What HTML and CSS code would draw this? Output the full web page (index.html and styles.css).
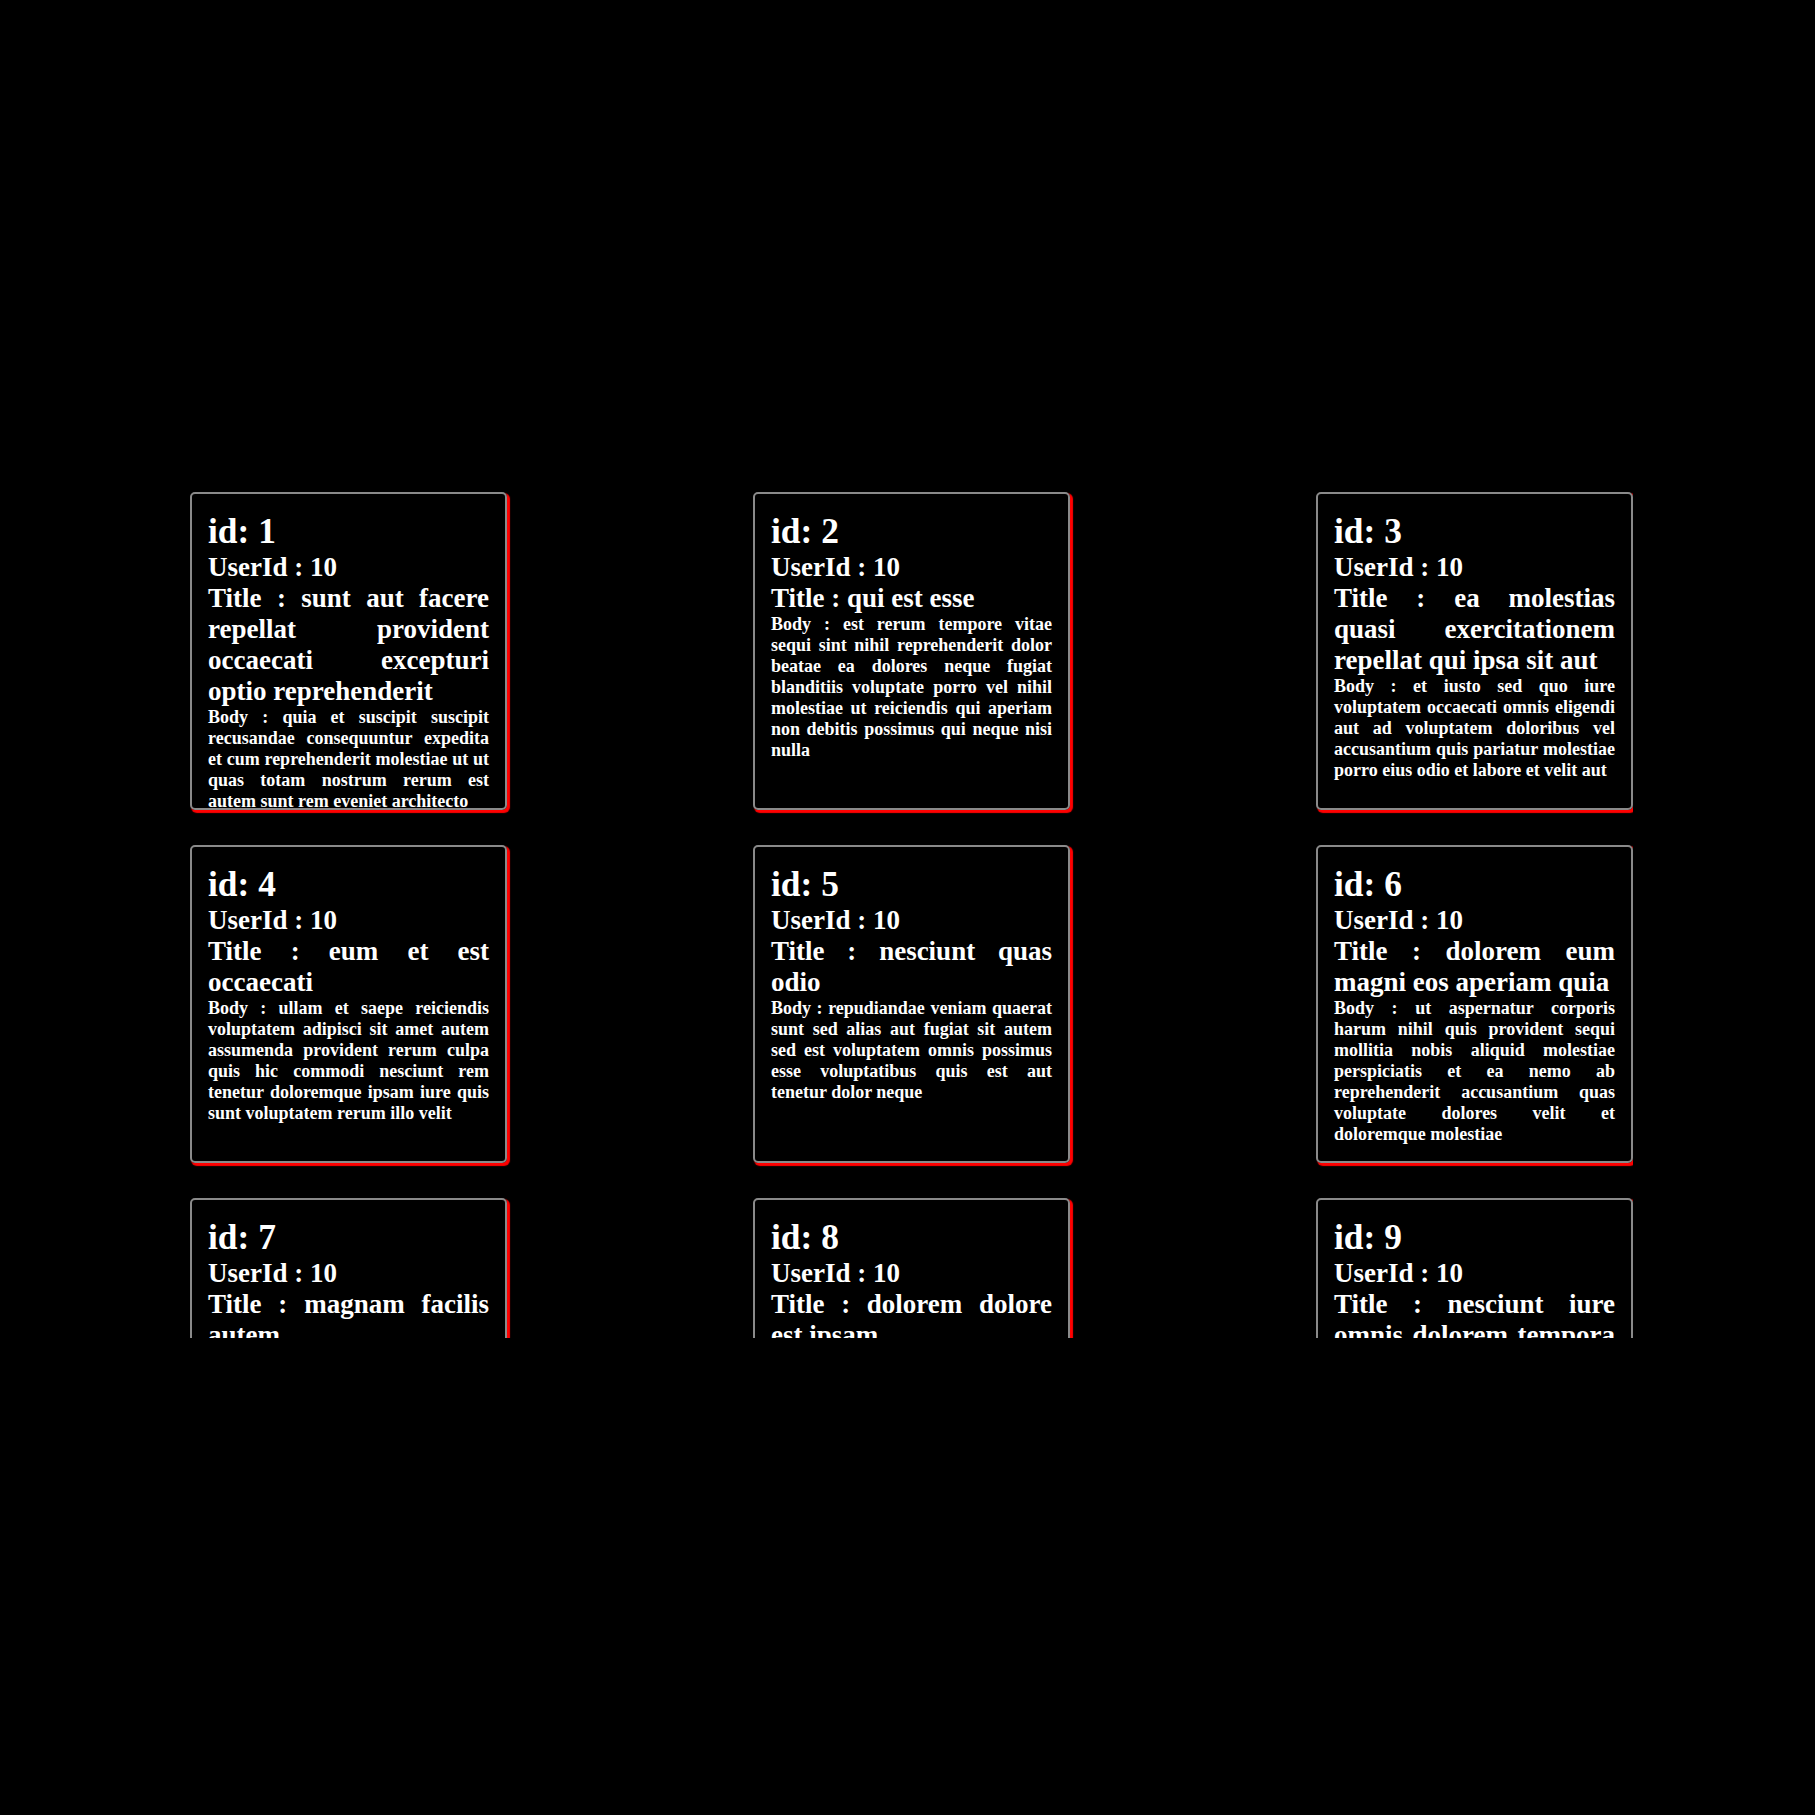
FILE: index.html
```html
<!DOCTYPE html>
<html lang="en">
<head>
<meta charset="utf-8">
<title>Posts</title>
<link rel="stylesheet" href="styles.css">
</head>
<body>
<main class="frame">
  <section class="grid">
    <article class="card">
      <h1 class="card-id">id: 1</h1>
      <h2 class="card-line">UserId : 10</h2>
      <h2 class="card-line">Title : sunt aut facere repellat provident occaecati excepturi optio reprehenderit</h2>
      <p class="card-body">Body : quia et suscipit suscipit recusandae consequuntur expedita et cum reprehenderit molestiae ut ut quas totam nostrum rerum est autem sunt rem eveniet architecto</p>
    </article>
    <article class="card">
      <h1 class="card-id">id: 2</h1>
      <h2 class="card-line">UserId : 10</h2>
      <h2 class="card-line">Title : qui est esse</h2>
      <p class="card-body">Body : est rerum tempore vitae sequi sint nihil reprehenderit dolor beatae ea dolores neque fugiat blanditiis voluptate porro vel nihil molestiae ut reiciendis qui aperiam non debitis possimus qui neque nisi nulla</p>
    </article>
    <article class="card">
      <h1 class="card-id">id: 3</h1>
      <h2 class="card-line">UserId : 10</h2>
      <h2 class="card-line">Title : ea molestias quasi exercitationem repellat qui ipsa sit aut</h2>
      <p class="card-body">Body : et iusto sed quo iure voluptatem occaecati omnis eligendi aut ad voluptatem doloribus vel accusantium quis pariatur molestiae porro eius odio et labore et velit aut</p>
    </article>
    <article class="card">
      <h1 class="card-id">id: 4</h1>
      <h2 class="card-line">UserId : 10</h2>
      <h2 class="card-line">Title : eum et est occaecati</h2>
      <p class="card-body">Body : ullam et saepe reiciendis voluptatem adipisci sit amet autem assumenda provident rerum culpa quis hic commodi nesciunt rem tenetur doloremque ipsam iure quis sunt voluptatem rerum illo velit</p>
    </article>
    <article class="card">
      <h1 class="card-id">id: 5</h1>
      <h2 class="card-line">UserId : 10</h2>
      <h2 class="card-line">Title : nesciunt quas odio</h2>
      <p class="card-body">Body : repudiandae veniam quaerat sunt sed alias aut fugiat sit autem sed est voluptatem omnis possimus esse voluptatibus quis est aut tenetur dolor neque</p>
    </article>
    <article class="card">
      <h1 class="card-id">id: 6</h1>
      <h2 class="card-line">UserId : 10</h2>
      <h2 class="card-line">Title : dolorem eum magni eos aperiam quia</h2>
      <p class="card-body">Body : ut aspernatur corporis harum nihil quis provident sequi mollitia nobis aliquid molestiae perspiciatis et ea nemo ab reprehenderit accusantium quas voluptate dolores velit et doloremque molestiae</p>
    </article>
    <article class="card">
      <h1 class="card-id">id: 7</h1>
      <h2 class="card-line">UserId : 10</h2>
      <h2 class="card-line">Title : magnam facilis autem</h2>
      <p class="card-body">Body : dolore placeat quibusdam ea quo vitae magni quis enim qui quis quo nemo aut saepe quidem repellat excepturi ut quia sunt ut sequi eos ea sed quas</p>
    </article>
    <article class="card">
      <h1 class="card-id">id: 8</h1>
      <h2 class="card-line">UserId : 10</h2>
      <h2 class="card-line">Title : dolorem dolore est ipsam</h2>
      <p class="card-body">Body : dignissimos aperiam dolorem qui eum facilis quibusdam animi sint suscipit qui sint possimus cum quaerat magni maiores excepturi ipsam ut commodi dolor voluptatum modi aut vitae</p>
    </article>
    <article class="card">
      <h1 class="card-id">id: 9</h1>
      <h2 class="card-line">UserId : 10</h2>
      <h2 class="card-line">Title : nesciunt iure omnis dolorem tempora et accusantium</h2>
      <p class="card-body">Body : consectetur animi nesciunt iure dolore enim quia ad veniam autem ut quam aut nobis et est aut quod aut provident voluptas autem voluptas</p>
    </article>
  </section>
</main>
</body>
</html>
```

FILE: styles.css
```css
html, body {
  margin: 0;
  padding: 0;
  background: #000;
}

body {
  min-height: 100vh;
  display: flex;
  align-items: center;
  justify-content: center;
  font-family: "Liberation Serif", "Times New Roman", serif;
  color: #fff;
}

.frame {
  width: 1451px;
  height: 861px;
  box-sizing: border-box;
  padding: 15px 0 0 8px;
  overflow: hidden;
}

.grid {
  display: grid;
  grid-template-columns: repeat(3, 317px);
  grid-auto-rows: 318px;
  column-gap: 246px;
  row-gap: 35px;
}

.card {
  box-sizing: border-box;
  border: 2px solid #8a8a8a;
  border-radius: 5px;
  box-shadow: 2px 2px 1px 1px #ff0000;
  padding: 16px 16px;
  overflow: hidden;
  text-align: justify;
  font-weight: bold;
}

.card-id {
  margin: 0;
  font-size: 35.4px;
  font-weight: bold;
}

.card-line {
  margin: 0;
  font-size: 27px;
  font-weight: bold;
}

.card-body {
  margin: 0;
  font-size: 18px;
  font-weight: bold;
}
```
